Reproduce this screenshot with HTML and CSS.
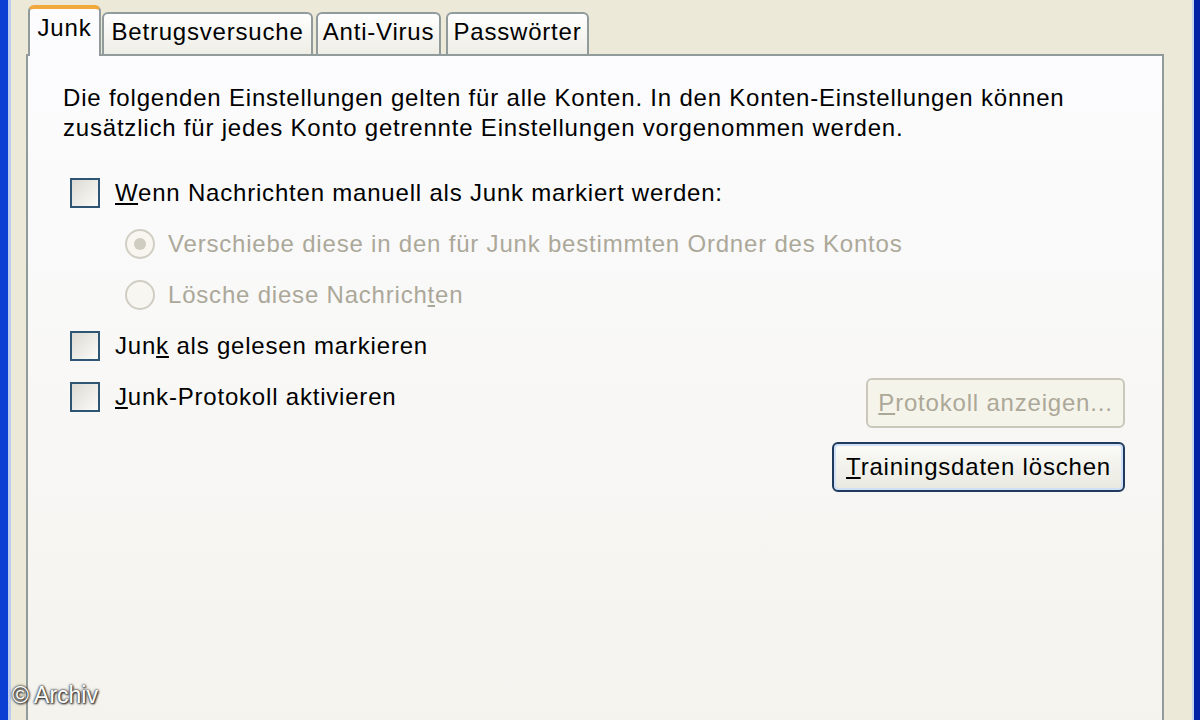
FILE: index.html
```html
<!DOCTYPE html>
<html lang="de">
<head>
    <meta charset="UTF-8">
    <title>Junk-Einstellungen</title>
    <link rel="stylesheet" href="styles.css">
</head>
<body>

<div class="window">
    <div class="dialog">
        <div class="tabs">
            <div class="tab active tab-junk">Junk</div>
            <div class="tab tab-betrug">Betrugsversuche</div>
            <div class="tab tab-virus">Anti-Virus</div>
            <div class="tab tab-pass">Passwörter</div>
        </div>
        <div class="panel">
            <p class="intro">Die folgenden Einstellungen gelten für alle Konten. In den Konten-Einstellungen können<br>zusätzlich für jedes Konto getrennte Einstellungen vorgenommen werden.</p>

            <label class="row first">
                <span class="check"></span>
                <span><u>W</u>enn Nachrichten manuell als Junk markiert werden:</span>
            </label>
            <div class="row sub disabled">
                <span class="radio checked"></span>
                <span>Verschiebe diese in den für Junk bestimmten Ordner des Kontos</span>
            </div>
            <div class="row sub disabled">
                <span class="radio"></span>
                <span>Lösche diese Nachrich<u>t</u>en</span>
            </div>
            <label class="row">
                <span class="check"></span>
                <span>Jun<u>k</u> als gelesen markieren</span>
            </label>
            <div class="row-split">
                <label class="row">
                    <span class="check"></span>
                    <span><u>J</u>unk-Protokoll aktivieren</span>
                </label>
                <button class="btn btn-disabled" disabled><u>P</u>rotokoll anzeigen...</button>
            </div>
            <div class="actions">
                <button class="btn btn-default"><u>T</u>rainingsdaten löschen</button>
            </div>
        </div>
    </div>
    <div class="credit">© Archiv</div>
</div>

</body>
</html>
```

FILE: styles.css
```css
body {
    margin: 0;
    width: 1200px;
    height: 720px;
    overflow: hidden;
    font-family: "Liberation Sans", Arial, sans-serif;
    font-size: 24px;
    letter-spacing: 0.8px;
    color: #000;
}
.window {
    position: relative;
    display: flex;
    height: 720px;
    box-sizing: border-box;
    background-color: #ece9d8;
    border-left: 8px solid #0b3fd4;
    border-right: 6px solid #0422a6;
    box-shadow: inset 3px 0 0 #b9cbef, inset -2px 0 0 #c6d3ef;
}
.dialog {
    flex: 1;
    display: flex;
    flex-direction: column;
    padding: 5px 30px 0 18px;
}
.tabs {
    display: flex;
    align-items: flex-end;
    margin-bottom: -2px;
    position: relative;
    z-index: 1;
}
.tab {
    box-sizing: border-box;
    height: 42px;
    margin-bottom: 2px;
    margin-left: 3px;
    padding-top: 4px;
    text-align: center;
    white-space: nowrap;
    border: 2px solid #919b9c;
    border-bottom: none;
    border-radius: 6px 6px 0 0;
    background: linear-gradient(#ffffff, #eeede5);
}
.tab.active {
    height: 51px;
    margin-bottom: 0;
    margin-left: 2px;
    padding-top: 5px;
    border-top: 4px solid #f2a93b;
    background: #fcfcfe;
}
.tab-junk { width: 73px; }
.tab-betrug { width: 211px; margin-left: 1px; }
.tab-virus { width: 125px; }
.tab-pass { width: 143px; margin-left: 5px; }

.panel {
    flex: 1;
    border: 2px solid #919b9c;
    border-bottom: none;
    background: linear-gradient(#fcfcfe, #f4f3ee);
    padding: 27px 37px 0 35px;
}
.intro {
    margin: 0;
    line-height: 30px;
}
.row {
    display: flex;
    align-items: center;
    height: 51px;
}
.row.first {
    margin-top: 24px;
}
.check {
    box-sizing: border-box;
    width: 30px;
    height: 30px;
    margin: 0 15px 0 7px;
    border: 2px solid #2f5574;
    background: linear-gradient(135deg, #dcdad2, #fbfbf9);
}
.sub {
    color: #aca899;
}
.radio {
    box-sizing: border-box;
    width: 30px;
    height: 30px;
    margin: 0 13px 0 62px;
    border: 2px solid #d0cec3;
    border-radius: 50%;
    background: #f7f6f1;
    display: flex;
    align-items: center;
    justify-content: center;
}
.radio.checked::after {
    content: "";
    width: 12px;
    height: 12px;
    border-radius: 50%;
    background: #cfcdc2;
}
.row-split {
    display: flex;
    justify-content: space-between;
    align-items: flex-start;
}
.btn {
    box-sizing: border-box;
    height: 50px;
    font-family: inherit;
    font-size: 24px;
    letter-spacing: 0.8px;
    border-radius: 6px;
    padding: 0;
}
.btn-disabled {
    width: 259px;
    margin-top: 7px;
    color: #aca899;
    border: 2px solid #cac8bb;
    background: #f5f4ea;
}
.actions {
    display: flex;
    justify-content: flex-end;
    margin-top: 14px;
}
.btn-default {
    width: 293px;
    color: #000;
    border: 2px solid #1f3a5c;
    background: linear-gradient(#fbfbf8, #e9e8e0);
    box-shadow: inset 0 0 0 2px #cfe0f7;
}
.credit {
    position: absolute;
    left: 4px;
    bottom: 11px;
    color: #fff;
    font-family: "Liberation Sans", Arial, sans-serif;
    font-size: 23px;
    letter-spacing: 0;
    text-shadow: 0 0 3px #333, 0 0 2px #333, 1px 1px 2px #222;
}
```
